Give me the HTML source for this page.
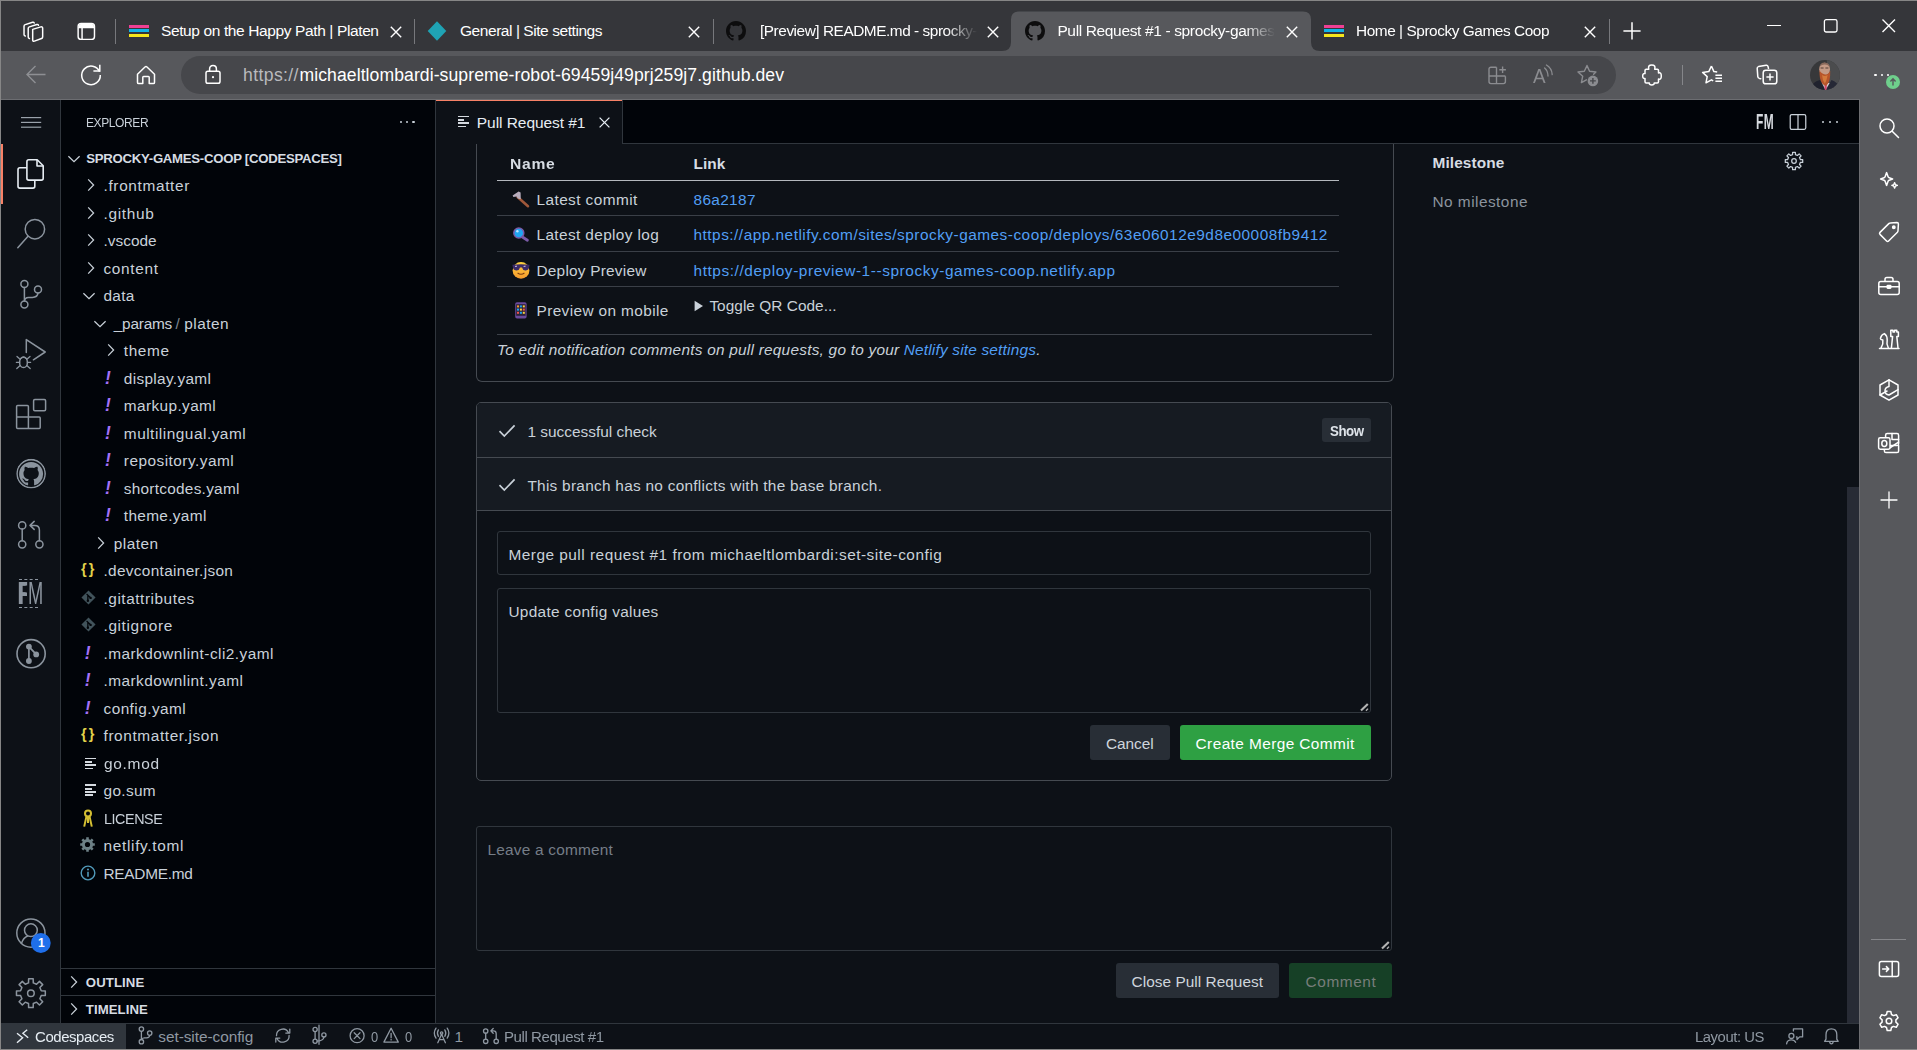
<!DOCTYPE html>
<html lang="en"><head><meta charset="utf-8"><title>Pull Request #1 - sprocky-games-coop</title>
<style>
html,body{margin:0;padding:0;background:#0d1117;}
body{width:1917px;height:1050px;position:relative;overflow:hidden;font-family:"Liberation Sans",sans-serif;}
.b{position:absolute;box-sizing:border-box;}
.t{position:absolute;white-space:pre;margin:0;padding:0;}
svg{overflow:visible;}
</style></head>
<body>
<div class="b" style="left:0px;top:0px;width:1917px;height:51px;background:#35363a;"></div>
<div class="b" style="left:0px;top:51px;width:1917px;height:49px;background:#57585c;"></div>
<div class="b" style="left:0px;top:99px;width:1860px;height:1px;background:#6c6d71;"></div>
<svg class="b" style="left:0px;top:0px;" width="1917" height="52" viewBox="0 0 1917 52"><path d="M1002,51 Q1011,51 1011,42 L1011,19.5 Q1011,11.5 1019,11.5 L1303,11.5 Q1311,11.5 1311,19.5 L1311,42 Q1311,51 1320,51 L1320,52 L1002,52 Z" fill="#57585c"/></svg>
<div class="b" style="left:181px;top:56px;width:1435px;height:38px;background:#46474b;border-radius:19px;"></div>
<svg class="b" style="left:22.2px;top:20.7px;" width="22.4" height="22.4" viewBox="0 0 22 22"><g fill="none" stroke="#ffffff" stroke-width="1.45" stroke-linejoin="round" stroke-linecap="round"><path d="M10.5 8.2 L18.5 5.8 Q20.3 5.4 20.3 7.2 L20.3 15.6 Q20.3 16.8 19.2 17.2 L12.2 19.8 Q10.5 20.3 10.5 18.6 Z"/><path d="M7.3 17.3 Q6.1 17.2 6.1 15.8 L6.1 7.4 Q6.1 6.2 7.3 5.8 L14.6 3.4 Q15.8 3.1 16.2 4.2"/><path d="M3.2 14.8 Q2 14.6 2 13.2 L2 5.2 Q2 4 3.2 3.6 L10.4 1.3 Q11.6 1 12 2"/></g></svg>
<svg class="b" style="left:76.6px;top:21.7px;" width="18.8" height="18.8" viewBox="0 0 20 20"><g fill="none" stroke="#ffffff" stroke-width="1.55"><rect x="1.2" y="1.5" width="17.4" height="17" rx="3.2"/><path d="M1.2 6 H18.6 M5.4 6 V18.5"/><path d="M2 5.5 V4.2 Q2 2.2 4 2.2 H16 Q18 2.2 18 4.2 V5.5 Z" fill="#ffffff" stroke="none"/></g></svg>
<div class="b" style="left:115px;top:19px;width:1px;height:25px;background:#77787c;"></div>
<div class="b" style="left:414px;top:19px;width:1px;height:25px;background:#77787c;"></div>
<div class="b" style="left:713px;top:19px;width:1px;height:25px;background:#77787c;"></div>
<div class="b" style="left:1609px;top:19px;width:1px;height:25px;background:#77787c;"></div>
<div class="b" style="left:128.5px;top:24.5px;width:20px;height:3.3px;background:#ef3f93;"></div>
<div class="b" style="left:128.5px;top:29.2px;width:20px;height:3.3px;background:#10b3e8;"></div>
<div class="b" style="left:128.5px;top:33.9px;width:20px;height:3.3px;background:#f5e61c;"></div>
<div class="b" style="left:1324px;top:24.5px;width:20px;height:3.3px;background:#ef3f93;"></div>
<div class="b" style="left:1324px;top:29.2px;width:20px;height:3.3px;background:#10b3e8;"></div>
<div class="b" style="left:1324px;top:33.9px;width:20px;height:3.3px;background:#f5e61c;"></div>
<svg class="b" style="left:427px;top:20px;" width="20" height="22" viewBox="0 0 20 22"><path d="M10 1.2 L19.3 11 L10 20.8 L0.7 11 Z" fill="#1fa3b4"/></svg>
<svg class="b" style="left:726px;top:21px;" width="20" height="20" viewBox="0 0 16 16"><path d="M8 0C3.58 0 0 3.58 0 8c0 3.54 2.29 6.53 5.47 7.59.4.07.55-.17.55-.38 0-.19-.01-.82-.01-1.49-2.01.37-2.53-.49-2.69-.94-.09-.23-.48-.94-.82-1.13-.28-.15-.68-.52-.01-.53.63-.01 1.08.58 1.23.82.72 1.21 1.87.87 2.33.66.07-.52.28-.87.51-1.07-1.78-.2-3.64-.89-3.64-3.95 0-.87.31-1.59.82-2.15-.08-.2-.36-1.02.08-2.12 0 0 .67-.21 2.2.82.64-.18 1.32-.27 2-.27.68 0 1.36.09 2 .27 1.53-1.04 2.2-.82 2.2-.82.44 1.1.16 1.92.08 2.12.51.56.82 1.27.82 2.15 0 3.07-1.87 3.75-3.65 3.95.29.25.54.73.54 1.48 0 1.07-.01 1.93-.01 2.2 0 .21.15.46.55.38A8.013 8.013 0 0016 8c0-4.42-3.58-8-8-8z" fill="#0d0d0e"/></svg>
<svg class="b" style="left:1025px;top:21px;" width="20" height="20" viewBox="0 0 16 16"><path d="M8 0C3.58 0 0 3.58 0 8c0 3.54 2.29 6.53 5.47 7.59.4.07.55-.17.55-.38 0-.19-.01-.82-.01-1.49-2.01.37-2.53-.49-2.69-.94-.09-.23-.48-.94-.82-1.13-.28-.15-.68-.52-.01-.53.63-.01 1.08.58 1.23.82.72 1.21 1.87.87 2.33.66.07-.52.28-.87.51-1.07-1.78-.2-3.64-.89-3.64-3.95 0-.87.31-1.59.82-2.15-.08-.2-.36-1.02.08-2.12 0 0 .67-.21 2.2.82.64-.18 1.32-.27 2-.27.68 0 1.36.09 2 .27 1.53-1.04 2.2-.82 2.2-.82.44 1.1.16 1.92.08 2.12.51.56.82 1.27.82 2.15 0 3.07-1.87 3.75-3.65 3.95.29.25.54.73.54 1.48 0 1.07-.01 1.93-.01 2.2 0 .21.15.46.55.38A8.013 8.013 0 0016 8c0-4.42-3.58-8-8-8z" fill="#0d0d0e"/></svg>
<svg class="b" style="left:387.5px;top:24px;" width="16" height="16" viewBox="0 0 16 16"><path d="M2.8 2.8 L13.2 13.2 M13.2 2.8 L2.8 13.2" stroke="#ffffff" stroke-width="1.4" fill="none"/></svg>
<svg class="b" style="left:686px;top:24px;" width="16" height="16" viewBox="0 0 16 16"><path d="M2.8 2.8 L13.2 13.2 M13.2 2.8 L2.8 13.2" stroke="#ffffff" stroke-width="1.4" fill="none"/></svg>
<svg class="b" style="left:985px;top:24px;" width="16" height="16" viewBox="0 0 16 16"><path d="M2.8 2.8 L13.2 13.2 M13.2 2.8 L2.8 13.2" stroke="#ffffff" stroke-width="1.4" fill="none"/></svg>
<svg class="b" style="left:1283.5px;top:24px;" width="16" height="16" viewBox="0 0 16 16"><path d="M2.8 2.8 L13.2 13.2 M13.2 2.8 L2.8 13.2" stroke="#ffffff" stroke-width="1.4" fill="none"/></svg>
<svg class="b" style="left:1582px;top:24px;" width="16" height="16" viewBox="0 0 16 16"><path d="M2.8 2.8 L13.2 13.2 M13.2 2.8 L2.8 13.2" stroke="#ffffff" stroke-width="1.4" fill="none"/></svg>
<svg class="b" style="left:1621px;top:20px;" width="22" height="22" viewBox="0 0 22 22"><path d="M11 2.3 V19.5 M2.4 10.9 H19.6" stroke="#ffffff" stroke-width="1.5" fill="none"/></svg>
<div class="b" style="left:1767px;top:25px;width:13.5px;height:1.3px;background:#ffffff;"></div>
<svg class="b" style="left:1823px;top:18px;" width="16" height="16" viewBox="0 0 16 16"><rect x="1.4" y="1.6" width="12.6" height="12.4" rx="1.8" fill="none" stroke="#ffffff" stroke-width="1.3"/></svg>
<svg class="b" style="left:1881px;top:18px;" width="16" height="16" viewBox="0 0 16 16"><path d="M1.5 1.5 L14 14 M14 1.5 L1.5 14" stroke="#ffffff" stroke-width="1.4" fill="none"/></svg>
<div class="t" style="left:161.00px;top:20.50px;font-size:15.5px;line-height:20px;color:#ffffff;letter-spacing:-0.381px;">Setup on the Happy Path | Platen</div>
<div class="t" style="left:460.00px;top:20.50px;font-size:15.5px;line-height:20px;color:#ffffff;letter-spacing:-0.442px;">General | Site settings</div>
<div class="t" style="left:759.50px;top:20.50px;font-size:15.5px;line-height:20px;color:#ffffff;letter-spacing:-0.450px;transform:scaleX(0.9909);transform-origin:0 50%;-webkit-mask-image:linear-gradient(90deg,#000 86%,transparent 100%);mask-image:linear-gradient(90deg,#000 86%,transparent 100%);">[Preview] README.md - sprocky-</div>
<div class="t" style="left:1057.40px;top:20.50px;font-size:15.5px;line-height:20px;color:#ffffff;letter-spacing:-0.357px;-webkit-mask-image:linear-gradient(90deg,#000 86%,transparent 100%);mask-image:linear-gradient(90deg,#000 86%,transparent 100%);">Pull Request #1 - sprocky-games</div>
<div class="t" style="left:1356.00px;top:20.50px;font-size:15.5px;line-height:20px;color:#ffffff;letter-spacing:-0.450px;transform:scaleX(0.9933);transform-origin:0 50%;">Home | Sprocky Games Coop</div>
<svg class="b" style="left:25px;top:64px;" width="22" height="22" viewBox="0 0 22 22"><path d="M20.5 10.5 H2 M10.5 2 L2 10.5 L10.5 19" stroke="#8e8f93" stroke-width="1.4" fill="none"/></svg>
<svg class="b" style="left:80px;top:64px;" width="22" height="22" viewBox="0 0 22 22"><g fill="none" stroke="#ffffff" stroke-width="1.5"><path d="M19.6 7.8 A9.3 9.3 0 1 0 20.3 11"/><path d="M13.4 4.9 H19.8 V-1.2" transform="translate(0,2)"/></g></svg>
<svg class="b" style="left:135px;top:64px;" width="22" height="22" viewBox="0 0 22 22"><path d="M2.5 10.2 L10 3 Q11 2.2 12 3 L19.5 10.2 V18.4 Q19.5 19.6 18.3 19.6 H14.2 V13.2 Q14.2 12.4 13.4 12.4 H8.6 Q7.8 12.4 7.8 13.2 V19.6 H3.7 Q2.5 19.6 2.5 18.4 Z" stroke="#ffffff" stroke-width="1.5" fill="none" stroke-linejoin="round"/></svg>
<svg class="b" style="left:204px;top:64px;" width="18" height="22" viewBox="0 0 18 22"><g fill="none" stroke="#ffffff" stroke-width="1.5"><rect x="2" y="7.2" width="14" height="12" rx="1.8"/><path d="M5.6 7 V5 Q5.6 1.6 9 1.6 Q12.4 1.6 12.4 5 V7"/><circle cx="9" cy="13.2" r="1.1" fill="#ffffff" stroke="none"/></g></svg>
<div class="t" style="left:243.00px;top:64.00px;font-size:17.6px;line-height:23px;color:#b9babd;letter-spacing:0.384px;">https://</div>
<div class="t" style="left:299.50px;top:64.00px;font-size:17.6px;line-height:23px;color:#ffffff;letter-spacing:0.075px;">michaeltlombardi-supreme-robot-69459j49prj259j7.github.dev</div>
<svg class="b" style="left:1488px;top:66px;" width="20" height="20" viewBox="0 0 20 20"><g fill="none" stroke="#8b8c90" stroke-width="1.4"><path d="M8.5 1.2 H3 Q1 1.2 1 3.2 V15.6 Q1 17.6 3 17.6 H15.4 Q17.4 17.6 17.4 15.6 V10.2 M8.5 1.2 V17.6 M1 10 H17.4"/><path d="M14.6 0.5 V7 M11.3 3.7 H17.9"/></g></svg>
<div class="t" style="left:1533.20px;top:61.60px;font-size:20.5px;line-height:27px;color:#8b8c90;transform:scaleX(.92);transform-origin:0 50%;">A</div>
<svg class="b" style="left:1540px;top:60px;" width="16" height="20" viewBox="1540 60 16 20"><g fill="none" stroke="#8b8c90" stroke-width="1.3" stroke-linecap="round"><path d="M1544.6 68 Q1547.8 70.6 1548 76"/><path d="M1546.4 65 Q1551.8 68 1552.2 74.6"/></g></svg>
<svg class="b" style="left:1576px;top:63px;" width="24" height="24" viewBox="0 0 24 24"><path d="M11 2.6 L13.6 8.2 L19.9 9 L17.6 11.2 M11 2.6 L8.3 8.2 L2 9 L6.7 13.2 L5.4 19.6 L10.4 16.8" fill="none" stroke="#8b8c90" stroke-width="1.4" stroke-linejoin="round" stroke-linecap="round"/><circle cx="16.9" cy="17.9" r="5.3" fill="#8b8c90"/><path d="M16.9 15 V20.8 M14 17.9 H19.8" stroke="#46474b" stroke-width="1.4"/></svg>
<svg class="b" style="left:1642px;top:64px;" width="20" height="22" viewBox="0 0 20 22"><path d="M3 6.4 Q3 5.2 4.2 5.2 H6.8 Q5.6 1 9.75 1 Q13.9 1 12.7 5.2 H15.3 Q16.5 5.2 16.5 6.4 V9 Q19.3 8 19.3 12 Q19.3 16 16.5 15 V17.8 Q16.5 19 15.3 19 H12.2 Q12.4 20.9 9.75 20.9 Q7.1 20.9 7.3 19 H4.2 Q3 19 3 17.8 V14.4 Q0.7 14.8 0.7 12 Q0.7 9.2 3 9.6 Z" fill="none" stroke="#ffffff" stroke-width="1.5" stroke-linejoin="round"/></svg>
<div class="b" style="left:1682px;top:65px;width:1px;height:20px;background:#85868a;"></div>
<svg class="b" style="left:1700px;top:63px;" width="24" height="24" viewBox="0 0 24 24"><g fill="none" stroke="#ffffff" stroke-width="1.5" stroke-linejoin="round"><path d="M11.4 3 L13.9 8.6 L17.2 9 M11.4 3 L8.8 8.6 L2.6 9.4 L7.2 13.6 L6 19.8 L11.4 16.8 L13.2 17.8"/><path d="M15.4 12.2 H22 M15.4 15.2 H22 M15.4 18.2 H22" stroke-width="1.4"/></g></svg>
<svg class="b" style="left:1756px;top:63px;" width="24" height="24" viewBox="0 0 24 24"><g fill="none" stroke="#ffffff" stroke-width="1.5" stroke-linejoin="round"><path d="M5.3 15.8 L3.4 15.4 Q2 15 1.8 13.6 L1.2 5.4 Q1.1 4 2.5 3.6 L10.2 2.2 Q11.6 2 12 3.4 L12.6 6"/><rect x="7.2" y="7.2" width="13.6" height="13.6" rx="2.6"/><path d="M14 10.4 V17.6 M10.4 14 H17.6"/></g></svg>
<svg class="b" style="left:1810px;top:60px;" width="30" height="30" viewBox="0 0 30 30"><defs><clipPath id="av"><circle cx="15" cy="15" r="15"/></clipPath></defs><g clip-path="url(#av)"><rect width="30" height="30" fill="#37383a"/><rect x="17" width="13" height="30" fill="#4b4c4e"/><path d="M0 30 Q2 21.5 10 20 L15 30 Z" fill="#20222e"/><path d="M30 30 Q28.5 22 21.5 20 L16 30 Z" fill="#262836"/><path d="M12 23 L15.5 30 L19.6 23 Z" fill="#ded3d6"/><path d="M14.4 24.4 L16.8 24.4 L16.6 30 L14.8 30 Z" fill="#d0456c"/><ellipse cx="14.6" cy="9.2" rx="5.4" ry="6.4" fill="#c49a86"/><path d="M9.4 7.4 Q10 2.6 14.8 2.6 Q19.6 2.8 20 8 Q18.4 4.6 14.8 4.6 Q11 4.6 9.4 7.4 Z" fill="#8a6a5c"/><path d="M9.6 10.6 Q9 19 12.2 23.6 Q14.6 26.6 16.6 25.4 Q20.6 22 20.2 10.8 Q18.6 14.6 15.4 14.4 Q12 14.6 9.6 10.6 Z" fill="#b8552a"/><path d="M12 15 Q14.6 17 17.6 15 Q16.6 21 14.8 23.6 Q12.4 20 12 15 Z" fill="#d47a3c"/><path d="M10.6 8 H13.6 M15.4 8 H18.4" stroke="#4a342c" stroke-width=".9"/></g></svg>
<div class="b" style="left:1874.3px;top:73.8px;width:2.4px;height:2.4px;background:#ffffff;border-radius:50%;"></div>
<div class="b" style="left:1880.6px;top:73.8px;width:2.4px;height:2.4px;background:#ffffff;border-radius:50%;"></div>
<div class="b" style="left:1886.8999999999999px;top:73.8px;width:2.4px;height:2.4px;background:#ffffff;border-radius:50%;"></div>
<svg class="b" style="left:1886px;top:75px;" width="14" height="14" viewBox="0 0 14 14"><circle cx="7" cy="7" r="7" fill="#6fcf8c"/><path d="M7 10.6 V4 M4.4 6.4 L7 3.8 L9.6 6.4" stroke="#57585c" stroke-width="1.4" fill="none"/></svg>
<div class="b" style="left:1859px;top:99px;width:58px;height:951px;background:#57585c;"></div>
<div class="b" style="left:1859px;top:99px;width:1px;height:951px;background:#6c6d71;"></div>
<svg class="b" style="left:1876.5px;top:115.5px;" width="24" height="24" viewBox="0 0 24 24"><g fill="none" stroke="#ffffff" stroke-width="1.5" stroke-linejoin="round" stroke-linecap="round"><circle cx="10" cy="10" r="7"/><path d="M15.2 15.2 L21.5 21.5"/></g></svg>
<svg class="b" style="left:1876.5px;top:168.0px;" width="24" height="24" viewBox="0 0 24 24"><g fill="none" stroke="#ffffff" stroke-width="1.5" stroke-linejoin="round" stroke-linecap="round"><path d="M9.6 4.6 L11 8.6 Q11.3 9.5 12.2 9.8 L15.6 11 L12.2 12.2 Q11.3 12.5 11 13.4 L9.6 17.4 L8.2 13.4 Q7.9 12.5 7 12.2 L3.6 11 L7 9.8 Q7.9 9.5 8.2 8.6 Z"/><path d="M17.6 14.6 L18.4 16.6 L20.4 17.4 L18.4 18.2 L17.6 20.2 L16.8 18.2 L14.8 17.4 L16.8 16.6 Z" stroke-width="1.3"/></g></svg>
<svg class="b" style="left:1876.5px;top:219.5px;" width="24" height="24" viewBox="0 0 24 24"><g fill="none" stroke="#ffffff" stroke-width="1.5" stroke-linejoin="round" stroke-linecap="round"><path d="M13.2 3 L20 2.6 Q21.4 2.6 21.4 4 L21 10.8 Q21 11.6 20.4 12.2 L11.6 21 Q10.6 22 9.6 21 L3 14.4 Q2 13.4 3 12.4 L11.8 3.6 Q12.4 3 13.2 3 Z"/><circle cx="16.8" cy="7.2" r="1.2" fill="#fff"/></g></svg>
<svg class="b" style="left:1876.5px;top:274.0px;" width="24" height="24" viewBox="0 0 24 24"><g fill="none" stroke="#ffffff" stroke-width="1.5" stroke-linejoin="round" stroke-linecap="round"><rect x="1.8" y="7.4" width="20.4" height="13" rx="2"/><path d="M8 7.2 V5.4 Q8 3.6 9.8 3.6 H14.2 Q16 3.6 16 5.4 V7.2 M1.8 12.8 H22.2"/><rect x="10.2" y="11.4" width="3.6" height="2.8" rx=".6" fill="#fff"/></g></svg>
<svg class="b" style="left:1876.5px;top:326.5px;" width="24" height="24" viewBox="0 0 24 24"><g fill="none" stroke="#ffffff" stroke-width="1.5" stroke-linejoin="round" stroke-linecap="round"><path d="M2.5 21.5 H12.5 M4 21 Q6.6 17 5.8 13 Q3.4 12.6 3.4 11.4 Q4.4 7.4 7.4 6.6 Q10.2 8.6 10.2 13 Q9.2 17 11.4 21"/><path d="M13 21.5 H22 M14.4 21 L15.6 9.4 H13.8 V3.2 H16 V5 H17.6 V3.2 H19.8 V5 H21.4 V9.4 H19.8 L21 21"/></g></svg>
<svg class="b" style="left:1876.5px;top:378.0px;" width="24" height="24" viewBox="0 0 24 24"><g fill="none" stroke="#ffffff" stroke-width="1.5" stroke-linejoin="round" stroke-linecap="round"><path d="M12 1.8 L21 7 V17 L12 22.2 L3 17 V7 Z"/><path d="M12 1.8 V8.6 Q8 9.4 8 13 Q8 16.4 12 17 L21 11.6 M3 17 L10 13"/></g></svg>
<svg class="b" style="left:1876.5px;top:430.5px;" width="24" height="24" viewBox="0 0 24 24"><g fill="none" stroke="#ffffff" stroke-width="1.5" stroke-linejoin="round" stroke-linecap="round"><rect x="8.6" y="2.6" width="13" height="12" rx="1.6"/><path d="M15 2.6 V8.6 H21.6 M21.6 11.2 L12.6 17 M21.6 14.6 V20 Q21.6 21.6 20 21.6 H9 Q7.4 21.6 7.4 20 V18.4"/><rect x="1.6" y="6.8" width="11.4" height="11.4" rx="1.6" fill="#57585c"/><ellipse cx="7.3" cy="12.5" rx="2.5" ry="3"/></g></svg>
<svg class="b" style="left:1876.5px;top:487.5px;" width="24" height="24" viewBox="0 0 24 24"><g fill="none" stroke="#ffffff" stroke-width="1.5" stroke-linejoin="round" stroke-linecap="round"><path d="M12 4 V20 M4 12 H20" stroke-width="1.3"/></g></svg>
<div class="b" style="left:1871px;top:939px;width:35px;height:1px;background:#85868a;"></div>
<svg class="b" style="left:1876.5px;top:957.0px;" width="24" height="24" viewBox="0 0 24 24"><g fill="none" stroke="#ffffff" stroke-width="1.5" stroke-linejoin="round" stroke-linecap="round"><rect x="2.4" y="4.6" width="19.2" height="14.8" rx="2"/><path d="M15.2 4.6 V19.4 M5.6 12 H11.6 M9.4 9.6 L11.8 12 L9.4 14.4"/></g></svg>
<svg class="b" style="left:1876.5px;top:1009.0px;" width="24" height="24" viewBox="0 0 24 24"><g fill="none" stroke="#ffffff" stroke-width="1.5" stroke-linejoin="round" stroke-linecap="round"><circle cx="12" cy="12" r="2.8"/><path d="M10.2 2 H13.8 L14.5 5 L16.4 6.1 L19.3 5.2 L21.1 8.3 L18.9 10.4 V12.6 L21.1 14.7 L19.3 17.8 L16.4 16.9 L14.5 18 L13.8 21 H10.2 L9.5 18 L7.6 16.9 L4.7 17.8 L2.9 14.7 L5.1 12.6 V10.4 L2.9 8.3 L4.7 5.2 L7.6 6.1 L9.5 5 Z" transform="translate(0,.5)"/></g></svg>
<div class="b" style="left:0px;top:0px;width:1917px;height:1px;background:#868686;"></div>
<div class="b" style="left:0px;top:0px;width:1px;height:1050px;background:#868686;"></div>
<div class="b" style="left:0px;top:1049px;width:1917px;height:1px;background:#868686;"></div>
<div class="b" style="left:1px;top:100px;width:1858px;height:949px;background:#0d1117;"></div>
<div class="b" style="left:1px;top:100px;width:60px;height:923px;background:#0d1117;"></div>
<div class="b" style="left:60px;top:100px;width:1px;height:923px;background:#30363d;"></div>
<div class="b" style="left:61px;top:100px;width:374px;height:923px;background:#010409;"></div>
<div class="b" style="left:435px;top:100px;width:1px;height:923px;background:#30363d;"></div>
<div class="b" style="left:436px;top:100px;width:1423px;height:44px;background:#010409;"></div>
<div class="b" style="left:436px;top:143px;width:1423px;height:1px;background:#30363d;"></div>
<div class="b" style="left:436px;top:100px;width:187px;height:44px;background:#0d1117;"></div>
<div class="b" style="left:436px;top:100px;width:187px;height:1.3px;background:#f78166;"></div>
<div class="b" style="left:622px;top:100px;width:1px;height:44px;background:#30363d;"></div>
<div class="b" style="left:458px;top:115.6px;width:10.5px;height:1.6px;background:#d5dae0;"></div>
<div class="b" style="left:458px;top:119px;width:6.4px;height:1.6px;background:#d5dae0;"></div>
<div class="b" style="left:458px;top:122.2px;width:10.5px;height:1.6px;background:#d5dae0;"></div>
<div class="b" style="left:458px;top:125.5px;width:8.2px;height:1.6px;background:#d5dae0;"></div>
<div class="t" style="left:476.80px;top:112.50px;font-size:15.5px;line-height:20px;color:#e6edf3;letter-spacing:-0.053px;">Pull Request #1</div>
<svg class="b" style="left:597px;top:114.5px;" width="15" height="15" viewBox="0 0 15 15"><path d="M2.6 2.6 L12.4 12.4 M12.4 2.6 L2.6 12.4" stroke="#e6edf3" stroke-width="1.3" fill="none"/></svg>
<div class="t" style="left:1756.00px;top:108.10px;font-size:21.5px;line-height:28px;color:#d5d9de;font-weight:700;letter-spacing:0.600px;transform:scaleX(0.5561);transform-origin:0 50%;">FM</div>
<svg class="b" style="left:1788.8px;top:112.6px;" width="18" height="18" viewBox="0 0 19 18"><rect x="1.3" y="1.2" width="16.4" height="15.6" rx="1.6" fill="none" stroke="#c9d1d9" stroke-width="1.3"/><path d="M9.5 1.2 V16.8" stroke="#c9d1d9" stroke-width="1.3"/></svg>
<div class="b" style="left:1821.9px;top:121px;width:2.3px;height:2.3px;background:#c9d1d9;border-radius:50%;"></div>
<div class="b" style="left:1828.9px;top:121px;width:2.3px;height:2.3px;background:#c9d1d9;border-radius:50%;"></div>
<div class="b" style="left:1835.9px;top:121px;width:2.3px;height:2.3px;background:#c9d1d9;border-radius:50%;"></div>
<div class="b" style="left:1847px;top:487px;width:11.6px;height:536px;background:#272b35;"></div>
<div class="b" style="left:1px;top:144px;width:2.2px;height:60px;background:#f78166;"></div>
<svg class="b" style="left:0;top:0" width="61" height="1050" viewBox="0 0 61 1050"><path d="M21 117.6 H41.2" stroke="#9aa2ab" stroke-width="1.2"/><path d="M21 122.4 H41.2" stroke="#9aa2ab" stroke-width="1.2"/><path d="M21 127.2 H41.2" stroke="#9aa2ab" stroke-width="1.2"/><g stroke="#e6edf3" stroke-width="1.6" fill="none" stroke-linejoin="round"><path d="M26.9 178.2 V161.7 Q26.9 159.8 28.8 159.8 H37.2 L43.2 165.8 V178.2 Q43.2 180.1 41.3 180.1 H28.8 Q26.9 180.1 26.9 178.2 Z"/><path d="M37 160 V166 H43"/><path d="M26.9 167.8 H19.9 Q18 167.8 18 169.7 V186.2 Q18 188.1 19.9 188.1 H32.9 Q34.8 188.1 34.8 186.2 V180.1"/></g><g stroke="#8b949e" stroke-width="1.5" fill="none" stroke-linejoin="round" stroke-linecap="round"><circle cx="34.9" cy="229.2" r="9.7"/><path d="M28 236.2 L17.8 247.8"/></g><g stroke="#8b949e" stroke-width="1.5" fill="none" stroke-linejoin="round" stroke-linecap="round"><circle cx="24.4" cy="283.9" r="3.5"/><circle cx="24.4" cy="304.6" r="3.5"/><circle cx="38" cy="289.4" r="3.5"/><path d="M24.4 287.4 V301.1 M38 292.9 Q37.6 297.4 32.4 297.4 H28.4 Q24.8 297.6 24.4 301"/></g><g stroke="#8b949e" stroke-width="1.5" fill="none" stroke-linejoin="round" stroke-linecap="round"><path d="M26.3 352.4 V339.6 L45.2 352 L33.4 359.8"/><ellipse cx="23.5" cy="362.4" rx="3.9" ry="5.2"/><path d="M20.6 358.6 Q23.5 355.4 26.4 358.6 M19.6 362.4 H16.4 M27.4 362.4 H30.6 M20.2 365.6 L16.8 368.6 M26.8 365.6 L30.2 368.6 M20.4 359.4 L17 356.4 M26.6 359.4 L30 356.4" stroke-width="1.3"/></g><g stroke="#8b949e" stroke-width="1.5" fill="none" stroke-linejoin="round" stroke-linecap="round"><path d="M17.6 405.6 H27.4 Q28.4 405.6 28.4 406.6 V417 H39.2 Q40.2 417 40.2 418 V427.4 Q40.2 428.4 39.2 428.4 H17.6 Q16.6 428.4 16.6 427.4 V406.6 Q16.6 405.6 17.6 405.6 Z M16.6 417 H28.4 V428.4"/><rect x="33.6" y="399.6" width="12" height="11.2" rx="1.2"/></g><circle cx="31.1" cy="473.7" r="14.1" fill="none" stroke="#8b949e" stroke-width="1.6"/><g transform="translate(19.1,461.9) scale(1.5)"><path d="M8 0C3.58 0 0 3.58 0 8c0 3.54 2.29 6.53 5.47 7.59.4.07.55-.17.55-.38 0-.19-.01-.82-.01-1.49-2.01.37-2.53-.49-2.69-.94-.09-.23-.48-.94-.82-1.13-.28-.15-.68-.52-.01-.53.63-.01 1.08.58 1.23.82.72 1.21 1.87.87 2.33.66.07-.52.28-.87.51-1.07-1.78-.2-3.64-.89-3.64-3.95 0-.87.31-1.59.82-2.15-.08-.2-.36-1.02.08-2.12 0 0 .67-.21 2.2.82.64-.18 1.32-.27 2-.27.68 0 1.36.09 2 .27 1.53-1.04 2.2-.82 2.2-.82.44 1.1.16 1.92.08 2.12.51.56.82 1.27.82 2.15 0 3.07-1.87 3.75-3.65 3.95.29.25.54.73.54 1.48 0 1.07-.01 1.93-.01 2.2 0 .21.15.46.55.38A8.013 8.013 0 0016 8c0-4.42-3.58-8-8-8z" fill="#8b949e"/></g><circle cx="31.1" cy="473.7" r="15.9" fill="none" stroke="#0d1117" stroke-width="2.1"/><g stroke="#8b949e" stroke-width="1.5" fill="none" stroke-linejoin="round" stroke-linecap="round"><circle cx="22.2" cy="525.4" r="3.6"/><circle cx="22.2" cy="544.3" r="3.6"/><circle cx="39.4" cy="544.3" r="3.6"/><path d="M22.2 529 V540.7 M39.4 540.7 V530 Q39.4 525.4 34.8 525.4 H30.4 M34.2 521.4 L30 525.4 L34.2 529.4"/></g><circle cx="31.1" cy="653.7" r="14.1" fill="none" stroke="#8b949e" stroke-width="1.6"/><g fill="#8b949e"><circle cx="28.9" cy="646.6" r="2.9"/><circle cx="36.2" cy="654.4" r="2.9"/><circle cx="28.9" cy="661" r="2.9"/></g><path d="M28.9 646.6 V661 M28.9 646.6 L36.2 654.4" stroke="#8b949e" stroke-width="1.7" fill="none"/><g stroke="#8b949e" stroke-width="1.5" fill="none" stroke-linejoin="round" stroke-linecap="round" stroke-width="1.6"><circle cx="30.9" cy="933.1" r="14.1"/><circle cx="30.9" cy="930.2" r="6.4"/><path d="M21.4 943.4 Q23.4 937.6 27.6 936 M34.2 936 Q38.4 937.6 40.4 943.4"/></g><circle cx="40.8" cy="943" r="9.9" fill="#1f6feb"/><g stroke="#8b949e" stroke-width="1.5" fill="none" stroke-linejoin="round" stroke-linecap="round" stroke-width="1.6"><path d="M28.53 982.87 L28.62 978.78 L33.18 978.78 L33.27 982.87 L36.53 984.22 L39.48 981.39 L42.71 984.62 L39.88 987.57 L41.23 990.83 L45.32 990.92 L45.32 995.48 L41.23 995.57 L39.88 998.83 L42.71 1001.78 L39.48 1005.01 L36.53 1002.18 L33.27 1003.53 L33.18 1007.62 L28.62 1007.62 L28.53 1003.53 L25.27 1002.18 L22.32 1005.01 L19.09 1001.78 L21.92 998.83 L20.57 995.57 L16.48 995.48 L16.48 990.92 L20.57 990.83 L21.92 987.57 L19.09 984.62 L22.32 981.39 L25.27 984.22 Z"/><circle cx="30.9" cy="993.2" r="3.3"/></g></svg>
<div class="t" style="left:38.10px;top:935.10px;font-size:12px;line-height:16px;color:#ffffff;font-weight:700;">1</div>
<div class="t" style="left:18.30px;top:574.10px;font-size:31px;line-height:40px;color:#8b949e;font-weight:700;transform:scaleX(.40);transform-origin:0 50%;text-shadow:2.5px 0 0 #8b949e,5px 0 0 #8b949e;">F</div>
<div class="t" style="left:28.30px;top:574.10px;font-size:31px;line-height:40px;color:#8b949e;transform:scaleX(.59);transform-origin:0 50%;">M</div>
<div class="b" style="left:19px;top:579px;width:18.5px;height:1.4px;border-top:1.4px dashed #8b949e;"></div>
<div class="b" style="left:19px;top:607px;width:18.5px;height:1.4px;border-top:1.4px dashed #8b949e;"></div>
<div class="t" style="left:86.20px;top:114.00px;font-size:13.2px;line-height:17px;color:#c9d1d9;letter-spacing:-0.450px;transform:scaleX(0.9115);transform-origin:0 50%;">EXPLORER</div>
<div class="b" style="left:399.9px;top:121px;width:2.3px;height:2.3px;background:#c9d1d9;border-radius:50%;"></div>
<div class="b" style="left:406.09999999999997px;top:121px;width:2.3px;height:2.3px;background:#c9d1d9;border-radius:50%;"></div>
<div class="b" style="left:412.29999999999995px;top:121px;width:2.3px;height:2.3px;background:#c9d1d9;border-radius:50%;"></div>
<svg class="b" style="left:66.8px;top:155px;" width="14" height="8" viewBox="0 0 14 8"><path d="M1.4 1.2 L7 6.6 L12.6 1.2" fill="none" stroke="#c9d1d9" stroke-width="1.25"/></svg>
<div class="t" style="left:86.20px;top:150.00px;font-size:13.2px;line-height:17px;color:#d6dce3;font-weight:700;letter-spacing:-0.274px;">SPROCKY-GAMES-COOP [CODESPACES]</div>
<div class="t" style="left:103.50px;top:175.75px;font-size:15.4px;line-height:20px;color:#c9d1d9;letter-spacing:0.654px;">.frontmatter</div>
<svg class="b" style="left:86.5px;top:177.75px;" width="8" height="14" viewBox="0 0 8 14"><path d="M1.2 1.4 L6.6 7 L1.2 12.6" fill="none" stroke="#c9d1d9" stroke-width="1.25"/></svg>
<div class="t" style="left:103.50px;top:204.00px;font-size:15.4px;line-height:20px;color:#c9d1d9;letter-spacing:0.664px;">.github</div>
<svg class="b" style="left:86.5px;top:206.0px;" width="8" height="14" viewBox="0 0 8 14"><path d="M1.2 1.4 L6.6 7 L1.2 12.6" fill="none" stroke="#c9d1d9" stroke-width="1.25"/></svg>
<div class="t" style="left:103.50px;top:230.75px;font-size:15.4px;line-height:20px;color:#c9d1d9;letter-spacing:0.009px;">.vscode</div>
<svg class="b" style="left:86.5px;top:232.75px;" width="8" height="14" viewBox="0 0 8 14"><path d="M1.2 1.4 L6.6 7 L1.2 12.6" fill="none" stroke="#c9d1d9" stroke-width="1.25"/></svg>
<div class="t" style="left:103.50px;top:259.00px;font-size:15.4px;line-height:20px;color:#c9d1d9;letter-spacing:0.667px;">content</div>
<svg class="b" style="left:86.5px;top:261.0px;" width="8" height="14" viewBox="0 0 8 14"><path d="M1.2 1.4 L6.6 7 L1.2 12.6" fill="none" stroke="#c9d1d9" stroke-width="1.25"/></svg>
<div class="t" style="left:103.50px;top:285.75px;font-size:15.4px;line-height:20px;color:#c9d1d9;letter-spacing:0.277px;">data</div>
<svg class="b" style="left:82.30000000000001px;top:291.55px;" width="14" height="8" viewBox="0 0 14 8"><path d="M1.4 1.2 L7 6.6 L12.6 1.2" fill="none" stroke="#c9d1d9" stroke-width="1.25"/></svg>
<div class="t" style="left:113.80px;top:314.00px;font-size:15.4px;line-height:20px;color:#c9d1d9;letter-spacing:-0.232px;">_params</div>
<svg class="b" style="left:92.60000000000001px;top:319.8px;" width="14" height="8" viewBox="0 0 14 8"><path d="M1.4 1.2 L7 6.6 L12.6 1.2" fill="none" stroke="#c9d1d9" stroke-width="1.25"/></svg>
<div class="t" style="left:123.80px;top:340.75px;font-size:15.4px;line-height:20px;color:#c9d1d9;letter-spacing:0.605px;">theme</div>
<svg class="b" style="left:106.8px;top:342.75px;" width="8" height="14" viewBox="0 0 8 14"><path d="M1.2 1.4 L6.6 7 L1.2 12.6" fill="none" stroke="#c9d1d9" stroke-width="1.25"/></svg>
<div class="t" style="left:123.80px;top:369.00px;font-size:15.4px;line-height:20px;color:#c9d1d9;letter-spacing:0.323px;">display.yaml</div>
<div class="t" style="left:105.00px;top:367.00px;font-size:17.5px;line-height:23px;color:#a371f7;font-weight:700;font-style:italic;">!</div>
<div class="t" style="left:123.80px;top:395.75px;font-size:15.4px;line-height:20px;color:#c9d1d9;letter-spacing:0.381px;">markup.yaml</div>
<div class="t" style="left:105.00px;top:393.75px;font-size:17.5px;line-height:23px;color:#a371f7;font-weight:700;font-style:italic;">!</div>
<div class="t" style="left:123.80px;top:424.00px;font-size:15.4px;line-height:20px;color:#c9d1d9;letter-spacing:0.508px;">multilingual.yaml</div>
<div class="t" style="left:105.00px;top:422.00px;font-size:17.5px;line-height:23px;color:#a371f7;font-weight:700;font-style:italic;">!</div>
<div class="t" style="left:123.80px;top:450.75px;font-size:15.4px;line-height:20px;color:#c9d1d9;letter-spacing:0.478px;">repository.yaml</div>
<div class="t" style="left:105.00px;top:448.75px;font-size:17.5px;line-height:23px;color:#a371f7;font-weight:700;font-style:italic;">!</div>
<div class="t" style="left:123.80px;top:479.00px;font-size:15.4px;line-height:20px;color:#c9d1d9;letter-spacing:0.253px;">shortcodes.yaml</div>
<div class="t" style="left:105.00px;top:477.00px;font-size:17.5px;line-height:23px;color:#a371f7;font-weight:700;font-style:italic;">!</div>
<div class="t" style="left:123.80px;top:505.75px;font-size:15.4px;line-height:20px;color:#c9d1d9;letter-spacing:0.328px;">theme.yaml</div>
<div class="t" style="left:105.00px;top:503.75px;font-size:17.5px;line-height:23px;color:#a371f7;font-weight:700;font-style:italic;">!</div>
<div class="t" style="left:113.80px;top:534.00px;font-size:15.4px;line-height:20px;color:#c9d1d9;letter-spacing:0.453px;">platen</div>
<svg class="b" style="left:96.8px;top:536.0px;" width="8" height="14" viewBox="0 0 8 14"><path d="M1.2 1.4 L6.6 7 L1.2 12.6" fill="none" stroke="#c9d1d9" stroke-width="1.25"/></svg>
<div class="t" style="left:103.50px;top:560.75px;font-size:15.4px;line-height:20px;color:#c9d1d9;letter-spacing:0.313px;">.devcontainer.json</div>
<div class="t" style="left:81.10px;top:560.25px;font-size:14.5px;line-height:19px;color:#e3d24a;font-weight:700;letter-spacing:2px;">{}</div>
<div class="t" style="left:103.50px;top:589.00px;font-size:15.4px;line-height:20px;color:#c9d1d9;letter-spacing:0.535px;">.gitattributes</div>
<svg class="b" style="left:80.5px;top:590.1px;" width="15" height="15" viewBox="0 0 14 14"><path d="M7 .4 L13.6 7 L7 13.6 L.4 7 Z" fill="#41535b"/><path d="M5.2 3.6 L8.8 7.2 M6.4 4.8 V10" stroke="#010409" stroke-width="1.2" fill="none"/><circle cx="6.4" cy="10" r="1.1" fill="#010409"/><circle cx="9" cy="7.4" r="1.1" fill="#010409"/></svg>
<div class="t" style="left:103.50px;top:615.75px;font-size:15.4px;line-height:20px;color:#c9d1d9;letter-spacing:0.608px;">.gitignore</div>
<svg class="b" style="left:80.5px;top:616.85px;" width="15" height="15" viewBox="0 0 14 14"><path d="M7 .4 L13.6 7 L7 13.6 L.4 7 Z" fill="#41535b"/><path d="M5.2 3.6 L8.8 7.2 M6.4 4.8 V10" stroke="#010409" stroke-width="1.2" fill="none"/><circle cx="6.4" cy="10" r="1.1" fill="#010409"/><circle cx="9" cy="7.4" r="1.1" fill="#010409"/></svg>
<div class="t" style="left:103.50px;top:644.00px;font-size:15.4px;line-height:20px;color:#c9d1d9;letter-spacing:0.453px;">.markdownlint-cli2.yaml</div>
<div class="t" style="left:84.70px;top:642.00px;font-size:17.5px;line-height:23px;color:#a371f7;font-weight:700;font-style:italic;">!</div>
<div class="t" style="left:103.50px;top:670.75px;font-size:15.4px;line-height:20px;color:#c9d1d9;letter-spacing:0.452px;">.markdownlint.yaml</div>
<div class="t" style="left:84.70px;top:668.75px;font-size:17.5px;line-height:23px;color:#a371f7;font-weight:700;font-style:italic;">!</div>
<div class="t" style="left:103.50px;top:699.00px;font-size:15.4px;line-height:20px;color:#c9d1d9;letter-spacing:0.436px;">config.yaml</div>
<div class="t" style="left:84.70px;top:697.00px;font-size:17.5px;line-height:23px;color:#a371f7;font-weight:700;font-style:italic;">!</div>
<div class="t" style="left:103.50px;top:725.75px;font-size:15.4px;line-height:20px;color:#c9d1d9;letter-spacing:0.601px;">frontmatter.json</div>
<div class="t" style="left:81.10px;top:725.25px;font-size:14.5px;line-height:19px;color:#e3d24a;font-weight:700;letter-spacing:2px;">{}</div>
<div class="t" style="left:103.50px;top:754.00px;font-size:15.4px;line-height:20px;color:#c9d1d9;letter-spacing:0.700px;transform:scaleX(1.0047);transform-origin:0 50%;">go.mod</div>
<div class="b" style="left:84.7px;top:757.6999999999999px;width:11.1px;height:1.7px;background:#d5dae0;"></div>
<div class="b" style="left:84.7px;top:761.0999999999999px;width:7.0px;height:1.7px;background:#d5dae0;"></div>
<div class="b" style="left:84.7px;top:764.4px;width:11.1px;height:1.7px;background:#d5dae0;"></div>
<div class="b" style="left:84.7px;top:767.6999999999999px;width:8.799999999999999px;height:1.7px;background:#d5dae0;"></div>
<div class="t" style="left:103.50px;top:780.75px;font-size:15.4px;line-height:20px;color:#c9d1d9;letter-spacing:0.343px;">go.sum</div>
<div class="b" style="left:84.7px;top:784.4499999999999px;width:11.1px;height:1.7px;background:#d5dae0;"></div>
<div class="b" style="left:84.7px;top:787.8499999999999px;width:7.0px;height:1.7px;background:#d5dae0;"></div>
<div class="b" style="left:84.7px;top:791.15px;width:11.1px;height:1.7px;background:#d5dae0;"></div>
<div class="b" style="left:84.7px;top:794.4499999999999px;width:8.799999999999999px;height:1.7px;background:#d5dae0;"></div>
<div class="t" style="left:103.50px;top:809.00px;font-size:15.4px;line-height:20px;color:#c9d1d9;letter-spacing:-0.450px;transform:scaleX(0.9307);transform-origin:0 50%;">LICENSE</div>
<svg class="b" style="left:81.9px;top:809.0px;" width="12" height="19" viewBox="0 0 12 19"><g fill="none" stroke="#d4bf33" stroke-width="2"><circle cx="6" cy="4.6" r="3"/><path d="M4.4 7.6 L2.2 17.6 M7.6 7.6 L9.8 17.6 M6 8 V14"/></g></svg>
<div class="t" style="left:103.50px;top:835.75px;font-size:15.4px;line-height:20px;color:#c9d1d9;letter-spacing:0.680px;">netlify.toml</div>
<svg class="b" style="left:80.4px;top:836.75px;" width="15" height="15" viewBox="0 0 15 15"><circle cx="7.5" cy="7.5" r="4.1" fill="none" stroke="#6d8086" stroke-width="3"/><g stroke="#6d8086" stroke-width="2.6"><path d="M7.5 .2 V3 M7.5 12 V14.8 M.2 7.5 H3 M12 7.5 H14.8 M2.3 2.3 L4.3 4.3 M10.7 10.7 L12.7 12.7 M2.3 12.7 L4.3 10.7 M10.7 4.3 L12.7 2.3"/></g></svg>
<div class="t" style="left:103.50px;top:864.00px;font-size:15.4px;line-height:20px;color:#c9d1d9;letter-spacing:-0.264px;">README.md</div>
<svg class="b" style="left:79.9px;top:865.1px;" width="16" height="16" viewBox="0 0 15 15"><circle cx="7.5" cy="7.5" r="6.4" fill="none" stroke="#519aba" stroke-width="1.3"/><path d="M7.5 6.4 V11" stroke="#519aba" stroke-width="1.5"/><circle cx="7.5" cy="4.2" r=".95" fill="#519aba"/></svg>
<div class="t" style="left:175.60px;top:314.00px;font-size:15.4px;line-height:20px;color:#7d8590;">/</div>
<div class="t" style="left:184.30px;top:314.00px;font-size:15.4px;line-height:20px;color:#c9d1d9;letter-spacing:0.472px;">platen</div>
<div class="b" style="left:61px;top:968px;width:374px;height:1px;background:#30363d;"></div>
<div class="b" style="left:61px;top:995px;width:374px;height:1px;background:#30363d;"></div>
<svg class="b" style="left:70px;top:974.5px;" width="8" height="14" viewBox="0 0 8 14"><path d="M1.2 1.4 L6.6 7 L1.2 12.6" fill="none" stroke="#c9d1d9" stroke-width="1.25"/></svg>
<svg class="b" style="left:70px;top:1002px;" width="8" height="14" viewBox="0 0 8 14"><path d="M1.2 1.4 L6.6 7 L1.2 12.6" fill="none" stroke="#c9d1d9" stroke-width="1.25"/></svg>
<div class="t" style="left:85.80px;top:973.50px;font-size:13.2px;line-height:17px;color:#d6dce3;font-weight:700;letter-spacing:0.085px;">OUTLINE</div>
<div class="t" style="left:85.80px;top:1001.00px;font-size:13.2px;line-height:17px;color:#d6dce3;font-weight:700;letter-spacing:0.065px;">TIMELINE</div>
<div class="b" style="left:476px;top:144px;width:917.8px;height:238px;border:1px solid #454a51;border-top:none;border-radius:0 0 6px 6px;"></div>
<div class="t" style="left:510.00px;top:154.00px;font-size:15.4px;line-height:20px;color:#d6dce3;font-weight:700;letter-spacing:0.700px;transform:scaleX(1.0154);transform-origin:0 50%;">Name</div>
<div class="t" style="left:693.50px;top:154.00px;font-size:15.4px;line-height:20px;color:#d6dce3;font-weight:700;letter-spacing:0.086px;">Link</div>
<div class="b" style="left:497px;top:180px;width:842px;height:1.3px;background:#b4b8bd;"></div>
<div class="b" style="left:497px;top:215px;width:842px;height:1px;background:#3a3f47;"></div>
<div class="b" style="left:497px;top:250.6px;width:842px;height:1px;background:#3a3f47;"></div>
<div class="b" style="left:497px;top:286px;width:842px;height:1px;background:#3a3f47;"></div>
<div class="b" style="left:497px;top:333.5px;width:875px;height:1.7px;background:#3d424a;"></div>
<svg class="b" style="left:511px;top:190px;" width="20" height="20" viewBox="0 0 20 20"><path d="M6.6 7 L17 16.2" stroke="#a0583a" stroke-width="2.6" stroke-linecap="round"/><path d="M1.6 5.6 L7.6 1.6 L9.6 2.4 L9.8 9.2 L6.8 8.6 L5.6 6.6 L2.4 7 Z" fill="#b9adbd"/></svg>
<svg class="b" style="left:511px;top:224px;" width="20" height="20" viewBox="0 0 20 20"><path d="M11.4 13 L16.4 16.2" stroke="#7a5aa6" stroke-width="2.8" stroke-linecap="round"/><circle cx="7.8" cy="9" r="5" fill="#1fa6f2" stroke="#7a5aa6" stroke-width="1.5"/><circle cx="6.4" cy="7.2" r="1.2" fill="#bfe6ff"/></svg>
<svg class="b" style="left:511.5px;top:261px;" width="18" height="18" viewBox="0 0 18 18"><defs><linearGradient id="sg" x1="0" y1="0" x2="0" y2="1"><stop offset="0" stop-color="#fdd13f"/><stop offset="1" stop-color="#f59a2d"/></linearGradient></defs><circle cx="9" cy="9.4" r="8.4" fill="url(#sg)"/><path d="M.4 3.8 Q9 2.6 17.6 3.8 L17 7 Q16.4 9.6 13.4 9.4 Q10.6 9.2 10 6.4 H8 Q7.4 9.2 4.6 9.4 Q1.6 9.6 1 7 Z" fill="#3b2a66"/><path d="M5.6 12 Q9 14.6 12.4 12" stroke="#7a3a10" stroke-width="1.1" fill="none"/><path d="M3 5.4 L5 5.2 M11.6 5.4 L13.6 5.2" stroke="#cfc3ee" stroke-width="1"/></svg>
<svg class="b" style="left:514.5px;top:301.5px;" width="12" height="17" viewBox="0 0 12 17"><rect x=".2" y=".2" width="11.4" height="16.4" rx="1.8" fill="#6a4a9c"/><rect x="1.2" y="2.2" width="9.4" height="11.6" fill="#2b2438"/><rect x="2" y="3.4" width="2" height="2" fill="#f59a2d"/><rect x="4.9" y="3.4" width="2" height="2" fill="#1fa6f2"/><rect x="7.8" y="3.4" width="2" height="2" fill="#fdd13f"/><rect x="2" y="6.6" width="2" height="2" fill="#1fa6f2"/><rect x="4.9" y="6.6" width="2" height="2" fill="#fdd13f"/><rect x="7.8" y="6.6" width="2" height="2" fill="#f0544c"/><rect x="2" y="9.8" width="2" height="2" fill="#f0544c"/><rect x="4.9" y="9.8" width="2" height="2" fill="#1fa6f2"/><rect x="7.8" y="9.8" width="2" height="2" fill="#fdd13f"/></svg>
<div class="t" style="left:536.50px;top:189.50px;font-size:15.4px;line-height:20px;color:#c9d1d9;letter-spacing:0.417px;">Latest commit</div>
<div class="t" style="left:693.50px;top:189.50px;font-size:15.4px;line-height:20px;color:#529ff5;letter-spacing:0.346px;">86a2187</div>
<div class="t" style="left:536.50px;top:224.50px;font-size:15.4px;line-height:20px;color:#c9d1d9;letter-spacing:0.370px;">Latest deploy log</div>
<div class="t" style="left:693.50px;top:224.50px;font-size:15.4px;line-height:20px;color:#529ff5;letter-spacing:0.493px;">https://app.netlify.com/sites/sprocky-games-coop/deploys/63e06012e9d8e00008fb9412</div>
<div class="t" style="left:536.50px;top:260.50px;font-size:15.4px;line-height:20px;color:#c9d1d9;letter-spacing:0.220px;">Deploy Preview</div>
<div class="t" style="left:693.50px;top:260.50px;font-size:15.4px;line-height:20px;color:#529ff5;letter-spacing:0.577px;">https://deploy-preview-1--sprocky-games-coop.netlify.app</div>
<div class="t" style="left:536.50px;top:300.50px;font-size:15.4px;line-height:20px;color:#c9d1d9;letter-spacing:0.378px;">Preview on mobile</div>
<svg class="b" style="left:693.5px;top:299.5px;" width="10" height="12" viewBox="0 0 10 12"><path d="M.6 .8 L9 6 L.6 11.2 Z" fill="#c9d1d9"/></svg>
<div class="t" style="left:709.40px;top:296.00px;font-size:15.4px;line-height:20px;color:#c9d1d9;letter-spacing:0.036px;">Toggle QR Code...</div>
<div class="t" style="left:497.00px;top:339.70px;font-size:15.4px;line-height:20px;color:#c9d1d9;font-style:italic;letter-spacing:0.237px;">To edit notification comments on pull requests, go to your</div>
<div class="t" style="left:903.70px;top:339.70px;font-size:15.4px;line-height:20px;color:#529ff5;font-style:italic;letter-spacing:0.194px;">Netlify site settings</div>
<div class="t" style="left:1036.20px;top:339.70px;font-size:15.4px;line-height:20px;color:#c9d1d9;font-style:italic;">.</div>
<div class="b" style="left:476px;top:402px;width:916.3px;height:379px;border:1px solid #454a51;border-radius:5px;"></div>
<div class="b" style="left:477px;top:403px;width:914.3px;height:54px;background:#161b22;border-radius:4px 4px 0 0;"></div>
<div class="b" style="left:477px;top:457px;width:914.3px;height:1px;background:#454a51;"></div>
<div class="b" style="left:477px;top:458px;width:914.3px;height:52px;background:#161b22;"></div>
<div class="b" style="left:477px;top:510px;width:914.3px;height:1px;background:#454a51;"></div>
<svg class="b" style="left:498.3px;top:423.8px;" width="18" height="14" viewBox="0 0 18 14"><path d="M1.5 7.2 L6.3 12 L16.6 1.4" fill="none" stroke="#c9d1d9" stroke-width="1.7"/></svg>
<svg class="b" style="left:498.3px;top:477.8px;" width="18" height="14" viewBox="0 0 18 14"><path d="M1.5 7.2 L6.3 12 L16.6 1.4" fill="none" stroke="#c9d1d9" stroke-width="1.7"/></svg>
<div class="t" style="left:527.40px;top:421.50px;font-size:15.4px;line-height:20px;color:#c9d1d9;letter-spacing:0.013px;">1 successful check</div>
<div class="b" style="left:1322px;top:418px;width:48.8px;height:24px;background:#282e36;border-radius:3px;"></div>
<div class="t" style="left:1329.70px;top:422.90px;font-size:13.8px;line-height:18px;color:#dfe4ea;font-weight:700;letter-spacing:-0.450px;transform:scaleX(0.9620);transform-origin:0 50%;">Show</div>
<div class="t" style="left:527.40px;top:475.50px;font-size:15.4px;line-height:20px;color:#c9d1d9;letter-spacing:0.270px;">This branch has no conflicts with the base branch.</div>
<div class="b" style="left:497px;top:531px;width:874px;height:44px;border:1px solid #30363d;border-radius:3px;"></div>
<div class="t" style="left:508.40px;top:544.50px;font-size:15.4px;line-height:20px;color:#c9d1d9;letter-spacing:0.495px;">Merge pull request #1 from michaeltlombardi:set-site-config</div>
<div class="b" style="left:497px;top:588px;width:874px;height:125px;border:1px solid #30363d;border-radius:3px;"></div>
<div class="t" style="left:508.40px;top:601.50px;font-size:15.4px;line-height:20px;color:#c9d1d9;letter-spacing:0.324px;">Update config values</div>
<svg class="b" style="left:1360.2px;top:703.2px;" width="9" height="9" viewBox="0 0 9 9"><path d="M7.8 1 L1 7.6" stroke="#b4b4b4" stroke-width="2.1" fill="none"/><path d="M8 5.6 L6 7.8" stroke="#b4b4b4" stroke-width="1.4" fill="none"/></svg>
<div class="b" style="left:1089.5px;top:725px;width:80.3px;height:35px;background:#282e36;border-radius:3px;"></div>
<div class="t" style="left:1106.00px;top:733.50px;font-size:15.4px;line-height:20px;color:#cfd5dc;letter-spacing:-0.064px;">Cancel</div>
<div class="b" style="left:1180px;top:725px;width:191px;height:35px;background:#2ea043;border-radius:3px;"></div>
<div class="t" style="left:1195.60px;top:733.50px;font-size:15.4px;line-height:20px;color:#ffffff;letter-spacing:0.412px;">Create Merge Commit</div>
<div class="b" style="left:476px;top:826px;width:916.3px;height:125px;border:1px solid #30363d;border-radius:3px;"></div>
<div class="t" style="left:487.50px;top:839.50px;font-size:15.4px;line-height:20px;color:#757d87;letter-spacing:0.211px;">Leave a comment</div>
<svg class="b" style="left:1381.3px;top:941.2px;" width="9" height="9" viewBox="0 0 9 9"><path d="M7.8 1 L1 7.6" stroke="#b4b4b4" stroke-width="2.1" fill="none"/><path d="M8 5.6 L6 7.8" stroke="#b4b4b4" stroke-width="1.4" fill="none"/></svg>
<div class="b" style="left:1115.5px;top:963px;width:163.5px;height:35px;background:#282e36;border-radius:3px;"></div>
<div class="t" style="left:1131.60px;top:971.50px;font-size:15.4px;line-height:20px;color:#cfd5dc;letter-spacing:0.030px;">Close Pull Request</div>
<div class="b" style="left:1289px;top:963px;width:103px;height:35px;background:#164026;border-radius:3px;"></div>
<div class="t" style="left:1305.60px;top:971.50px;font-size:15.4px;line-height:20px;color:#767d7a;letter-spacing:0.580px;">Comment</div>
<div class="t" style="left:1432.50px;top:153.00px;font-size:15.4px;line-height:20px;color:#d6dce3;font-weight:700;letter-spacing:0.102px;">Milestone</div>
<div class="t" style="left:1432.50px;top:192.00px;font-size:15.4px;line-height:20px;color:#8b949e;letter-spacing:0.470px;">No milestone</div>
<svg class="b" style="left:1780px;top:147px;" width="28" height="28" viewBox="1780 147 28 28"><g fill="none" stroke="#c9d1d9" stroke-width="1.25" stroke-linejoin="round"><path d="M1792.54 154.67 L1792.62 152.31 L1795.38 152.31 L1795.46 154.67 L1797.45 155.49 L1799.17 153.88 L1801.12 155.83 L1799.51 157.55 L1800.33 159.54 L1802.69 159.62 L1802.69 162.38 L1800.33 162.46 L1799.51 164.45 L1801.12 166.17 L1799.17 168.12 L1797.45 166.51 L1795.46 167.33 L1795.38 169.69 L1792.62 169.69 L1792.54 167.33 L1790.55 166.51 L1788.83 168.12 L1786.88 166.17 L1788.49 164.45 L1787.67 162.46 L1785.31 162.38 L1785.31 159.62 L1787.67 159.54 L1788.49 157.55 L1786.88 155.83 L1788.83 153.88 L1790.55 155.49 Z"/><circle cx="1794" cy="161" r="2.3"/></g></svg>
<div class="b" style="left:1px;top:1023px;width:1858px;height:26px;background:#0d1117;"></div>
<div class="b" style="left:1px;top:1023px;width:1858px;height:1px;background:#30363d;"></div>
<div class="b" style="left:1px;top:1024px;width:125px;height:25px;background:#30363d;"></div>
<svg class="b" style="left:0;top:1020px" width="1860" height="30" viewBox="0 1020.7 1860 30"><path d="M17 1034 L22.6 1038.4 L17 1043.4 M27.2 1030.4 L22.9 1034 L28.2 1038.4" fill="none" stroke="#e6edf3" stroke-width="1.4"/><g fill="none" stroke="#8f98a2" stroke-width="1.3" stroke-linejoin="round" stroke-linecap="round"><circle cx="141.4" cy="1029.8" r="2.2"/><circle cx="141.4" cy="1042.4" r="2.2"/><circle cx="149.7" cy="1033.8" r="2.2"/><path d="M141.4 1032 V1040.2 M149.7 1036 Q149.6 1038.4 146.6 1038.6 H144.4 Q141.8 1038.8 141.4 1040.2"/></g><g fill="none" stroke="#8f98a2" stroke-width="1.3" stroke-linejoin="round" stroke-linecap="round"><path d="M276.5 1036.4 A6.3 6.3 0 0 1 288.4 1033.2 M289.8 1029.8 V1033.8 H285.8"/><path d="M289.1 1036.2 A6.3 6.3 0 0 1 277.2 1039.4 M275.8 1042.8 V1038.8 H279.8"/></g><g fill="none" stroke="#8f98a2" stroke-width="1.3" stroke-linejoin="round" stroke-linecap="round"><path d="M319 1025.8 V1045"/><circle cx="315.1" cy="1030.2" r="2.1"/><circle cx="315.1" cy="1041.9" r="2.1"/><circle cx="323.9" cy="1035.6" r="2.1"/><path d="M315.1 1032.3 V1039.8 M323.9 1037.7 Q323.6 1041.4 317.2 1041.9"/></g><g fill="none" stroke="#8f98a2" stroke-width="1.3" stroke-linejoin="round" stroke-linecap="round"><circle cx="357.1" cy="1036.4" r="7"/><path d="M354.2 1033.5 L360 1039.3 M360 1033.5 L354.2 1039.3"/></g><g fill="none" stroke="#8f98a2" stroke-width="1.3" stroke-linejoin="round" stroke-linecap="round"><path d="M391.1 1029 L398.3 1042.8 H383.9 Z"/><path d="M391.1 1034 V1038.4 M391.1 1040.2 V1040.6"/></g><g fill="none" stroke="#8f98a2" stroke-width="1.3" stroke-linejoin="round" stroke-linecap="round"><path d="M441.6 1035 L437.8 1043.4 M441.6 1035 L445.4 1043.4 M439.2 1040.4 H444"/><circle cx="441.6" cy="1033.8" r="1.2"/><path d="M438.4 1037 Q436.4 1033.8 438.4 1030.6 M444.8 1037 Q446.8 1033.8 444.8 1030.6 M436 1038.8 Q432.6 1033.8 436 1028.8 M447.2 1038.8 Q450.6 1033.8 447.2 1028.8"/></g><g fill="none" stroke="#8f98a2" stroke-width="1.3" stroke-linejoin="round" stroke-linecap="round"><circle cx="485.7" cy="1031.7" r="2.2"/><circle cx="485.7" cy="1042" r="2.2"/><circle cx="496.2" cy="1042" r="2.2"/><path d="M485.7 1033.9 V1039.8 M496.2 1039.8 V1034.4 Q496.2 1031.6 493.4 1031.6 H491 M493.2 1029.2 L490.8 1031.6 L493.2 1034"/></g><g fill="none" stroke="#8f98a2" stroke-width="1.3" stroke-linejoin="round" stroke-linecap="round"><circle cx="1791.4" cy="1036.6" r="2.5"/><path d="M1786.6 1044.6 Q1787 1040.6 1791.4 1040.6 Q1794.4 1040.6 1795.6 1043"/><path d="M1793.4 1031.6 V1029.6 H1802.6 V1037.6 H1799.6 L1797 1040.2 V1037.6 H1796.4"/></g><g fill="none" stroke="#8f98a2" stroke-width="1.3" stroke-linejoin="round" stroke-linecap="round"><path d="M1824.6 1042 H1838.2 L1836.8 1039.8 V1035.4 Q1836.8 1029.6 1831.4 1029.6 Q1826 1029.6 1826 1035.4 V1039.8 Z M1829.6 1042.2 Q1829.8 1044.6 1831.4 1044.6 Q1833 1044.6 1833.2 1042.2"/></g></svg>
<div class="t" style="left:34.70px;top:1026.90px;font-size:15.4px;line-height:20px;color:#e6edf3;letter-spacing:-0.450px;transform:scaleX(0.9729);transform-origin:0 50%;">Codespaces</div>
<div class="t" style="left:158.30px;top:1026.90px;font-size:15.4px;line-height:20px;color:#8f98a2;letter-spacing:-0.058px;">set-site-config</div>
<div class="t" style="left:370.90px;top:1026.90px;font-size:15.4px;line-height:20px;color:#8f98a2;transform:scaleX(.84);transform-origin:0 50%;">0</div>
<div class="t" style="left:404.50px;top:1026.90px;font-size:15.4px;line-height:20px;color:#8f98a2;transform:scaleX(.84);transform-origin:0 50%;">0</div>
<div class="t" style="left:454.40px;top:1026.90px;font-size:15.4px;line-height:20px;color:#8f98a2;">1</div>
<div class="t" style="left:504.20px;top:1026.90px;font-size:15.4px;line-height:20px;color:#8f98a2;letter-spacing:-0.450px;transform:scaleX(0.9778);transform-origin:0 50%;">Pull Request #1</div>
<div class="t" style="left:1695.00px;top:1026.90px;font-size:15.4px;line-height:20px;color:#8f98a2;letter-spacing:-0.450px;transform:scaleX(0.9625);transform-origin:0 50%;">Layout: US</div>
</body></html>
